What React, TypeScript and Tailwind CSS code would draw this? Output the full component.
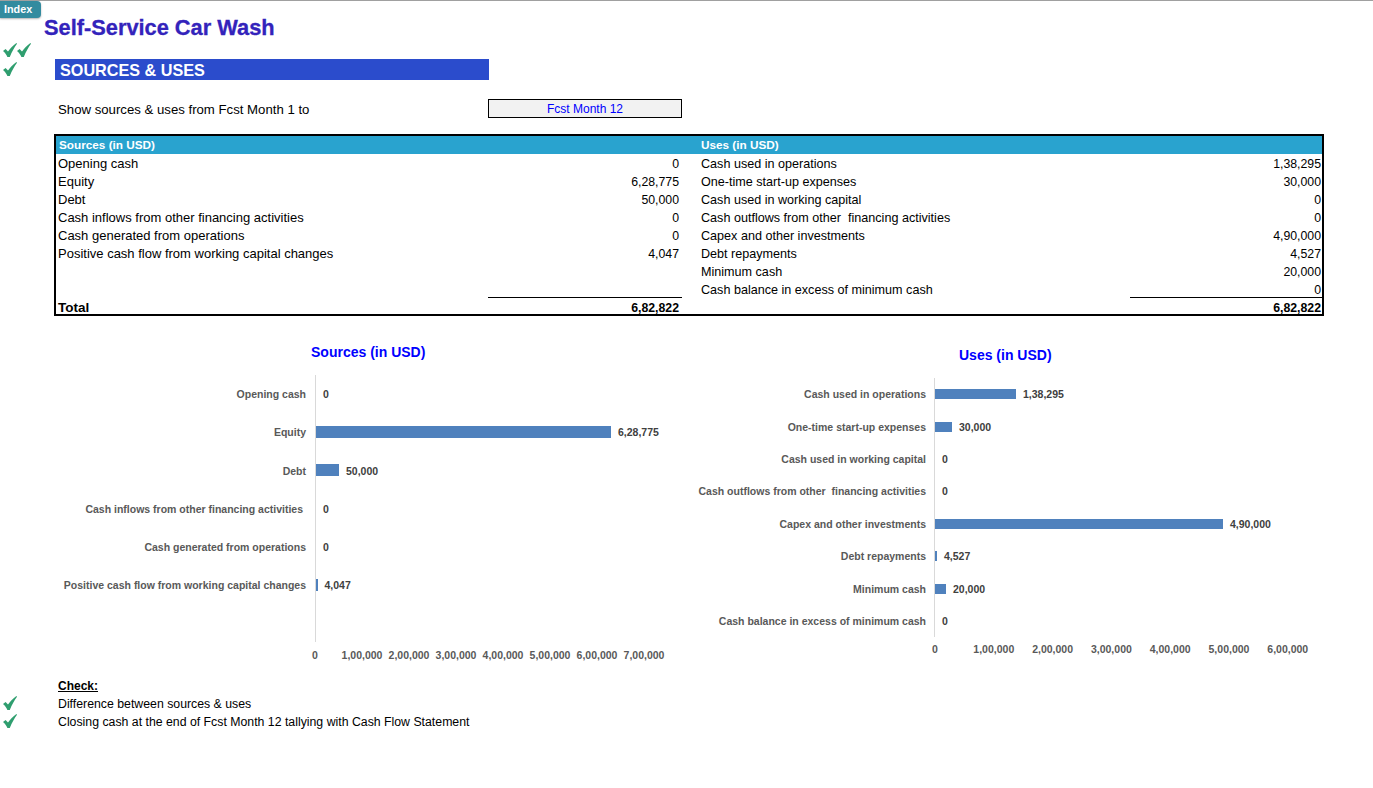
import { ReactNode } from 'react';

const sources = [
  ['Opening cash', '0'],
  ['Equity', '6,28,775'],
  ['Debt', '50,000'],
  ['Cash inflows from other financing activities', '0'],
  ['Cash generated from operations', '0'],
  ['Positive cash flow from working capital changes', '4,047'],
  ['', ''],
  ['', ''],
];

const uses = [
  ['Cash used in operations', '1,38,295'],
  ['One-time start-up expenses', '30,000'],
  ['Cash used in working capital', '0'],
  ['Cash outflows from other  financing activities', '0'],
  ['Capex and other investments', '4,90,000'],
  ['Debt repayments', '4,527'],
  ['Minimum cash', '20,000'],
  ['Cash balance in excess of minimum cash', '0'],
];

const sourceBars = [
  { label: 'Opening cash', value: '0', width: 0 },
  { label: 'Equity', value: '6,28,775', width: 295 },
  { label: 'Debt', value: '50,000', width: 23 },
  { label: 'Cash inflows from other financing activities', value: '0', width: 0, nudge: 3 },
  { label: 'Cash generated from operations', value: '0', width: 0 },
  { label: 'Positive cash flow from working capital changes', value: '4,047', width: 1.5 },
  { label: '', value: '', width: 0 },
];

const useBars = [
  { label: 'Cash used in operations', value: '1,38,295', width: 81 },
  { label: 'One-time start-up expenses', value: '30,000', width: 17 },
  { label: 'Cash used in working capital', value: '0', width: 0 },
  { label: 'Cash outflows from other  financing activities', value: '0', width: 0 },
  { label: 'Capex and other investments', value: '4,90,000', width: 288 },
  { label: 'Debt repayments', value: '4,527', width: 2 },
  { label: 'Minimum cash', value: '20,000', width: 11 },
  { label: 'Cash balance in excess of minimum cash', value: '0', width: 0 },
];

function Check() {
  return (
    <svg width="14" height="14" viewBox="0 0 14 14" className="block shrink-0">
      <path d="M0 8 L2.6 6 L5 8.6 C7.2 5.2 10 2.4 13.4 0 L14 0.8 C11.4 4.4 9 8.6 6.8 14 L4.4 14 C3.4 11.6 2 9.6 0 8 Z" fill="#2f9e6f" />
    </svg>
  );
}

function Row({ label, value, labelClass }: { label: string; value: string; labelClass: string }) {
  return (
    <div className="flex h-[18px] items-center justify-between whitespace-pre pt-px">
      <span className={labelClass}>{label}</span>
      <span className="pt-[2px] text-[12.3px]">{value}</span>
    </div>
  );
}

function Gutter({ count, children }: { count: number; children: ReactNode }) {
  return (
    <div className="flex items-center">
      <div className="flex w-[58px] shrink-0 pb-[2px] pl-[3px]">
        {Array.from({ length: count }).map((_, i) => (
          <Check key={i} />
        ))}
      </div>
      {children}
    </div>
  );
}

interface BarChartProps {
  title: string;
  bars: { label: string; value: string; width: number; nudge?: number }[];
  ticks: string[];
  labelWidth: number;
  labelPad: number;
  rowHeight: number;
  barHeight: number;
  tickStep: number;
  tickGap: number;
  titleClass: string;
}

function BarChart({ title, bars, ticks, labelWidth, labelPad, rowHeight, barHeight, tickStep, tickGap, titleClass }: BarChartProps) {
  return (
    <div className="text-[10.5px] font-bold text-[#595959]">
      <div className={`h-[33px] text-[14px] text-[#0000ff] ${titleClass}`}>{title}</div>
      <div className="flex">
        <div className="flex shrink-0 flex-col" style={{ width: labelWidth }}>
          {bars.map((b, i) => (
            <div
              key={i}
              className="flex items-center justify-end whitespace-pre pt-[2px]"
              style={{ height: rowHeight, paddingRight: labelPad + (b.nudge ?? 0) }}
            >
              {b.label}
            </div>
          ))}
        </div>
        <div className="flex flex-col border-l border-[#d9d9d9]">
          {bars.map((b, i) => (
            <div key={i} className="flex items-center gap-[7px]" style={{ height: rowHeight }}>
              {b.width > 0 && <div className="bg-[#4f81bd]" style={{ width: b.width, height: barHeight }} />}
              <span className={`pt-[2px] text-[#404040] ${b.width === 0 ? 'ml-[7px]' : ''}`}>{b.value}</span>
            </div>
          ))}
        </div>
      </div>
      <div className="flex" style={{ marginLeft: 315 - tickStep / 2, marginTop: tickGap }}>
        {ticks.map((t) => (
          <div key={t} className="shrink-0 text-center whitespace-nowrap" style={{ width: tickStep }}>
            {t}
          </div>
        ))}
      </div>
    </div>
  );
}

export default function App() {
  return (
    <div className="h-[788px] w-[1373px] overflow-hidden border-t border-[#a0a0a0] bg-white font-['Liberation_Sans',Arial,sans-serif] text-[12px] text-black">
      <div className="flex h-[26px] items-start">
        <div className="flex h-[17px] w-[41px] items-center rounded-br-[4px] rounded-tr-[4px] bg-[#338b9f] pl-[4px] text-[10.8px] font-bold text-white shadow-[0_1px_2px_rgba(0,0,0,0.3)]">
          Index
        </div>
        <h1 className="ml-[3px] mt-[15px] text-[21.8px] leading-[24px] font-bold text-[#3323bb] [-webkit-text-stroke:0.3px_#3323bb]">
          Self-Service Car Wash
        </h1>
      </div>

      <div className="mt-[16px] h-[16px]">
        <Gutter count={2}>
          <span />
        </Gutter>
      </div>

      <Gutter count={1}>
        <div className="-ml-[3px] flex h-[21px] w-[434px] items-center bg-[#2b4ccc] pl-[5px] pt-[2px] text-[16.2px] font-bold text-white">
          SOURCES &amp; USES
        </div>
      </Gutter>

      <div className="ml-[58px] mt-[19px] flex h-[19px] items-center">
        <span className="w-[430px] pt-[2px] text-[13.2px]">Show sources &amp; uses from Fcst Month 1 to</span>
        <div className="flex h-[19px] w-[194px] items-center justify-center border border-black bg-[#f2f2f2] text-[#0000ff]">
          Fcst Month 12
        </div>
      </div>

      <div className="ml-[54px] mt-[16px] w-[1270px] border-2 border-black">
        <div className="grid grid-cols-[645px_1fr] bg-[#29a3cf] text-[11.75px] text-white">
          <div className="flex h-[18px] items-center pl-[3px] font-bold">Sources (in USD)</div>
          <div className="flex h-[18px] items-center font-bold">Uses (in USD)</div>
        </div>
        <div className="grid grid-cols-[645px_1fr]">
          <div className="pl-[2px] pr-[22px]">
            {sources.map(([l, v], i) => (
              <Row key={i} label={l} value={v} labelClass="text-[13px]" />
            ))}
          </div>
          <div className="pr-px">
            {uses.map(([l, v]) => (
              <Row key={l} label={l} value={v} labelClass="pt-[2px] text-[12.6px]" />
            ))}
          </div>
        </div>
        <div className="grid h-[16px] grid-cols-[645px_1fr] font-bold">
          <div className="relative flex items-center justify-between pl-[2px] pr-[22px]">
            <div className="absolute right-[19px] top-[-1px] h-px w-[194px] bg-black" />
            <span className="text-[13.5px]">Total</span>
            <span className="text-[12.3px]">6,82,822</span>
          </div>
          <div className="relative flex items-center justify-end pr-px">
            <div className="absolute right-0 top-[-1px] h-px w-[192px] bg-black" />
            <span className="text-[12.3px]">6,82,822</span>
          </div>
        </div>
      </div>

      <div className="mt-[26px] flex">
        <div className="w-[620px] shrink-0">
          <BarChart
            title="Sources (in USD)"
            bars={sourceBars}
            ticks={['0', '1,00,000', '2,00,000', '3,00,000', '4,00,000', '5,00,000', '6,00,000', '7,00,000']}
            labelWidth={315}
            labelPad={9}
            rowHeight={38.2}
            barHeight={12}
            tickStep={47}
            tickGap={6}
            titleClass="ml-[311px]"
          />
        </div>
        <div className="shrink-0">
          <BarChart
            title="Uses (in USD)"
            bars={useBars}
            ticks={['0', '1,00,000', '2,00,000', '3,00,000', '4,00,000', '5,00,000', '6,00,000']}
            labelWidth={314}
            labelPad={8}
            rowHeight={32.4}
            barHeight={10}
            tickStep={58.8}
            tickGap={5}
            titleClass="ml-[339px] mt-[3px]"
          />
        </div>
      </div>

      <div className="mt-[13px] text-[12.3px]">
        <div className="ml-[58px] flex h-[18px] items-center text-[12px] font-bold underline">Check:</div>
        <Gutter count={1}>
          <span className="flex h-[18px] items-center">Difference between sources &amp; uses</span>
        </Gutter>
        <Gutter count={1}>
          <span className="flex h-[18px] items-center">Closing cash at the end of Fcst Month 12 tallying with Cash Flow Statement</span>
        </Gutter>
      </div>
    </div>
  );
}
